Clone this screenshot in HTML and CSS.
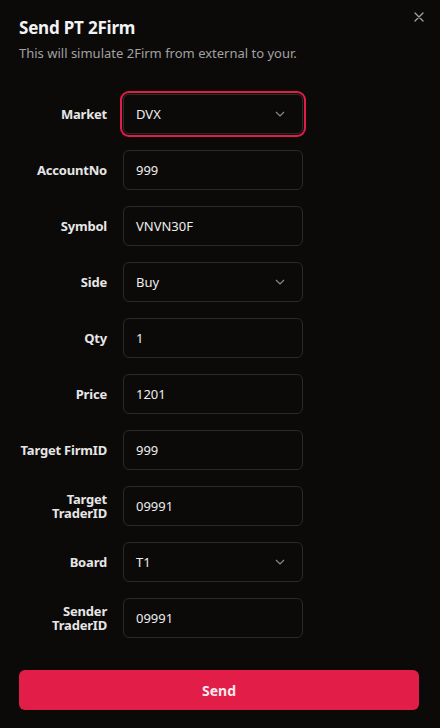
FILE: index.html
```html
<!DOCTYPE html>
<html lang="en">

<head>
    <meta charset="UTF-8">
    <meta name="viewport" content="width=device-width, initial-scale=1.0">
    <title>Send PT 2Firm</title>
    <link rel="stylesheet" href="styles.css">
</head>

<body>
    <div class="dialog">
        <button class="close" aria-label="Close">
            <svg width="10" height="10" viewBox="0 0 10 10"><path d="M1 1L9 9M9 1L1 9" stroke="#a3a3a3" stroke-width="1.3" stroke-linecap="round"/></svg>
        </button>

        <div class="header">
            <h2>Send PT 2Firm</h2>
            <p>This will simulate 2Firm from external to your.</p>
        </div>

        <form class="form">
            <div class="row">
                <label>Market</label>
                <div class="field select focus"><span>DVX</span><svg class="chev" width="10" height="6" viewBox="0 0 10 6"><path d="M1 1L5 5L9 1" fill="none" stroke="#8a8a8a" stroke-width="1.2"/></svg></div>
            </div>
            <div class="row">
                <label>AccountNo</label>
                <div class="field"><span>999</span></div>
            </div>
            <div class="row">
                <label>Symbol</label>
                <div class="field"><span>VNVN30F</span></div>
            </div>
            <div class="row">
                <label>Side</label>
                <div class="field select"><span>Buy</span><svg class="chev" width="10" height="6" viewBox="0 0 10 6"><path d="M1 1L5 5L9 1" fill="none" stroke="#8a8a8a" stroke-width="1.2"/></svg></div>
            </div>
            <div class="row">
                <label>Qty</label>
                <div class="field"><span>1</span></div>
            </div>
            <div class="row">
                <label>Price</label>
                <div class="field"><span>1201</span></div>
            </div>
            <div class="row">
                <label>Target FirmID</label>
                <div class="field"><span>999</span></div>
            </div>
            <div class="row">
                <label>Target<br>TraderID</label>
                <div class="field"><span>09991</span></div>
            </div>
            <div class="row">
                <label>Board</label>
                <div class="field select"><span>T1</span><svg class="chev" width="10" height="6" viewBox="0 0 10 6"><path d="M1 1L5 5L9 1" fill="none" stroke="#8a8a8a" stroke-width="1.2"/></svg></div>
            </div>
            <div class="row">
                <label>Sender<br>TraderID</label>
                <div class="field"><span>09991</span></div>
            </div>

            <button type="button" class="send">Send</button>
        </form>
    </div>
</body>

</html>
```

FILE: styles.css
```css
body {
    margin: 0;
    background: #0b0a09;
    font-family: "Noto Sans", "Open Sans", sans-serif;
    color: #ededed;
}

.dialog {
    position: relative;
    padding: 16px 21px 18px 19px;
}

.close {
    position: absolute;
    top: 12px;
    right: 16px;
    background: none;
    border: none;
    padding: 0;
    display: flex;
    cursor: pointer;
}

.header h2 {
    margin: 0;
    font-size: 17px;
    font-weight: 700;
    line-height: 24px;
    color: #f2f2f2;
    letter-spacing: -0.2px;
}

.header p {
    margin: 4px 0 0;
    font-size: 13px;
    line-height: 18px;
    color: #a1a1a1;
}

.form {
    display: flex;
    flex-direction: column;
    gap: 16px;
    margin-top: 32px;
}

.row {
    display: flex;
    align-items: center;
    gap: 16px;
}

.row label {
    width: 88px;
    text-align: right;
    font-size: 13px;
    font-weight: 700;
    line-height: 14px;
    color: #e6e6e6;
    letter-spacing: -0.2px;
}

.field {
    box-sizing: border-box;
    width: 180px;
    height: 40px;
    border: 1px solid #2b2a29;
    border-radius: 6px;
    display: flex;
    align-items: center;
    justify-content: space-between;
    padding: 0 17px 0 12px;
    font-size: 13px;
    color: #ededed;
}

.field.focus {
    box-shadow: 0 0 0 1px #0b0a09, 0 0 0 3px #e11d48;
}

.chev {
    display: block;
}

.send {
    margin-top: 16px;
    height: 40px;
    border: none;
    border-radius: 6px;
    background: #e11d48;
    color: #fbe7ec;
    font-family: inherit;
    font-size: 14px;
    font-weight: 700;
    cursor: pointer;
}
```
